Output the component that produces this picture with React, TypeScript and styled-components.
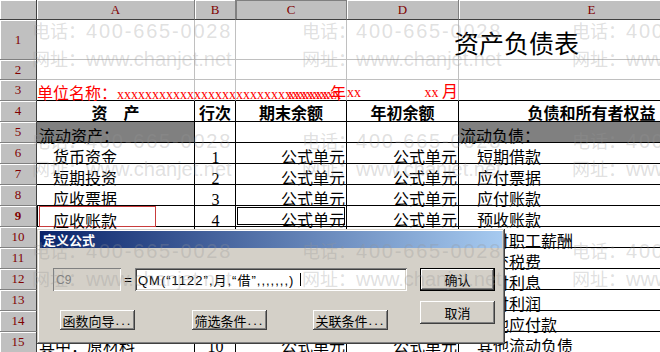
import styled, { createGlobalStyle } from 'styled-components';

const CJK = '"Noto Sans CJK SC", "Liberation Sans", sans-serif';
const SERIF = '"Liberation Serif", "Noto Sans CJK SC", serif';
const SANS = '"Liberation Sans", "Noto Sans CJK SC", sans-serif';

const GlobalStyle = createGlobalStyle`
  html, body {
    margin: 0;
    padding: 0;
    background: #ffffff;
  }
  #root {
    width: 660px;
    height: 352px;
  }
`;

const Page = styled.div`
  position: relative;
  width: 660px;
  height: 352px;
  overflow: hidden;
  background: #ffffff;
  font-family: ${CJK};
`;

const Sheet = styled.div`
  display: grid;
  grid-template-columns: 37px 158px 41px 111px 112px 266px;
  grid-template-rows: 20px 40px 20px repeat(13, 21px);
`;

const Corner = styled.div`
  background: #c0c0c0;
  border-right: 1px solid #404040;
  border-bottom: 1px solid #404040;
  box-shadow: inset 1px 1px 0 #ffffff;
`;

const ColHead = styled.div<{ $active?: boolean }>`
  display: flex;
  align-items: center;
  justify-content: center;
  background: #c0c0c0;
  border-right: 1px solid #808080;
  border-bottom: 1px solid #404040;
  box-shadow: inset 1px 1px 0 ${p => (p.$active ? '#808080' : '#ffffff')};
  color: #800000;
  font-family: ${SERIF};
  font-size: 13px;
`;

const RowHead = styled.div<{ $active?: boolean }>`
  display: flex;
  align-items: center;
  justify-content: center;
  background: #c0c0c0;
  border-right: 1px solid #404040;
  border-bottom: 1px solid #808080;
  box-shadow: inset 1px 1px 0 #ffffff;
  color: #800000;
  font-family: ${SERIF};
  font-size: 13px;
  font-weight: ${p => (p.$active ? 700 : 400)};
`;

// rows 1-3, light grid lines
const PlainCell = styled.div<{ $edge?: boolean; $justify?: string; $pt?: number }>`
  display: flex;
  align-items: baseline;
  justify-content: ${p => p.$justify ?? 'flex-start'};
  padding-top: ${p => p.$pt ?? 0}px;
  border-right: 1px solid #c0c0c0;
  border-bottom: 1px solid ${p => (p.$edge ? '#000000' : '#c0c0c0')};
  white-space: nowrap;
  min-width: 0;
`;

const Title = styled.span`
  margin-left: -5px;
  font-size: 25px;
  line-height: 25px;
  color: #000000;
`;

const RedLabel = styled.span`
  color: #ff0000;
  font-size: 16px;
  line-height: 16px;
`;

const RedFill = styled.span`
  color: #ff0000;
  font-family: ${SERIF};
  font-size: 14px;
  line-height: 16px;
`;

const HeadCell = styled.div`
  display: flex;
  justify-content: center;
  padding-top: 3px;
  border-right: 1px solid #000000;
  border-bottom: 1px solid #000000;
  font-size: 16px;
  line-height: 16px;
  font-weight: 700;
  white-space: nowrap;
`;

const TableCell = styled.div<{
  $align?: 'left' | 'center' | 'right';
  $indent?: number;
  $shade?: boolean;
  $serif?: boolean;
  $selected?: boolean;
  $mark?: boolean;
}>`
  display: flex;
  justify-content: ${p => (p.$align === 'right' ? 'flex-end' : p.$align === 'center' ? 'center' : 'flex-start')};
  padding-top: ${p => (p.$serif ? 7 : p.$mark ? 0 : 5)}px;
  padding-left: ${p => p.$indent ?? 1}px;
  padding-right: ${p => (p.$align === 'right' ? 1 : 0)}px;
  background: ${p => (p.$shade ? '#808080' : 'transparent')};
  border-right: 1px solid #000000;
  border-bottom: 1px solid #000000;
  box-shadow: ${p =>
    p.$selected
      ? 'inset 0 0 0 1px #ffffff, inset 0 0 0 2px #000000'
      : p.$mark
        ? 'inset 1px 0 0 #000000'
        : 'none'};
  font-family: ${p => (p.$serif ? SERIF : CJK)};
  font-size: 16px;
  line-height: 16px;
  color: #000000;
  white-space: nowrap;
  min-width: 0;
`;

const EditBox = styled.div`
  box-sizing: border-box;
  width: 117px;
  height: 21px;
  margin-left: 2px;
  padding: 5px 0 0 13px;
  border: 1px solid #c83c3c;
`;

const Dialog = styled.div`
  position: absolute;
  left: 37px;
  top: 229px;
  width: 468px;
  height: 115px;
  box-sizing: border-box;
  padding: 2px 3px 3px;
  background: #d4d0c8;
  box-shadow: inset -1px -1px 0 #404040, inset 1px 1px 0 #d4d0c8, inset -2px -2px 0 #808080,
    inset 2px 2px 0 #ffffff;
  font-family: ${CJK};
  font-size: 13px;
  color: #000000;
`;

const TitleBar = styled.div`
  display: flex;
  align-items: center;
  height: 17px;
  padding-left: 3px;
  background: linear-gradient(90deg, #0a246a, #a6caf0);
  color: #ffffff;
  font-size: 13px;
  line-height: 13px;
  font-weight: 700;
`;

const DialogBody = styled.div`
  display: grid;
  grid-template-columns: 354px 75px;
  column-gap: 13px;
  padding: 20px 0 0 13px;
`;

const LeftCol = styled.div`
  display: flex;
  flex-direction: column;
`;

const RightCol = styled.div`
  display: flex;
  flex-direction: column;
  gap: 10px;
`;

const FormulaRow = styled.div`
  display: flex;
  height: 23px;
`;

const RefField = styled.div`
  display: flex;
  align-items: center;
  box-sizing: border-box;
  width: 68px;
  padding-left: 3px;
  background: #d4d0c8;
  box-shadow: inset 1px 1px 0 #808080, inset -1px -1px 0 #ffffff;
  color: #808080;
  font-family: ${SANS};
  font-size: 12px;
`;

const Equals = styled.div`
  display: flex;
  align-items: center;
  justify-content: center;
  width: 14px;
  font-family: ${SANS};
  font-size: 13px;
`;

const FormulaField = styled.div`
  display: flex;
  align-items: center;
  flex: 1;
  box-sizing: border-box;
  padding-left: 3px;
  background: #ffffff;
  box-shadow: inset 1px 1px 0 #808080, inset -1px -1px 0 #ffffff, inset 2px 2px 0 #404040,
    inset -2px -2px 0 #d4d0c8;
  font-family: ${SANS};
  font-size: 13px;
  letter-spacing: 1px;
  white-space: pre;
`;

const Caret = styled.span`
  display: inline-block;
  width: 1px;
  height: 13px;
  margin-left: 6px;
  background: #000000;
`;

const ButtonRow = styled.div`
  display: flex;
  margin-top: 19px;
  padding-left: 7px;
`;

const Button = styled.div<{ $h?: number; $ml?: number; $default?: boolean }>`
  display: flex;
  align-items: center;
  justify-content: center;
  box-sizing: border-box;
  width: 75px;
  height: ${p => p.$h ?? 23}px;
  margin-left: ${p => p.$ml ?? 0}px;
  background: #d4d0c8;
  border: ${p => (p.$default ? '1px solid #000000' : 'none')};
  box-shadow: inset -1px -1px 0 #404040, inset 1px 1px 0 #ffffff, inset -2px -2px 0 #808080,
    inset 2px 2px 0 #d4d0c8;
  font-size: 13px;
  line-height: 13px;
  white-space: nowrap;
`;

const Dots = styled.span`
  font-family: ${SANS};
  letter-spacing: 2px;
  margin-left: 1px;
`;

const Watermark = styled.div`
  position: absolute;
  left: 32px;
  top: 16px;
  display: grid;
  grid-template-columns: repeat(3, 270px);
  grid-auto-rows: 110px;
  pointer-events: none;
  color: rgba(150, 150, 150, 0.3);
`;

const MarkLine = styled.div`
  height: 28px;
  line-height: 28px;
  white-space: nowrap;
  font-family: ${SANS};
  font-size: 20px;
`;

const MarkCJK = styled.span`
  font-family: ${CJK};
  font-size: 18px;
`;

const MarkDigits = styled.span<{ $spacing: number }>`
  letter-spacing: ${p => p.$spacing}px;
`;

type Row = {
  a: string;
  b: string;
  e: string;
  formula?: boolean;
  shade?: boolean;
  flat?: boolean;
};

const rows: Row[] = [
  { a: '流动资产：', b: '', e: '流动负债：', shade: true },
  { a: '货币资金', b: '1', e: '短期借款', formula: true },
  { a: '短期投资', b: '2', e: '应付票据', formula: true },
  { a: '应收票据', b: '3', e: '应付账款', formula: true },
  { a: '应收账款', b: '4', e: '预收账款', formula: true },
  { a: '预付账款', b: '5', e: '应付职工薪酬', formula: true },
  { a: '应收股利', b: '6', e: '应交税费', formula: true },
  { a: '应收利息', b: '7', e: '应付利息', formula: true },
  { a: '其他应收款', b: '8', e: '应付利润', formula: true },
  { a: '存货', b: '9', e: '其他应付款', formula: true },
  { a: '其中：原材料', b: '10', e: '其他流动负债', formula: true, flat: true },
];

const cols = ['A', 'B', 'C', 'D', 'E'];

export default function App() {
  return (
    <Page>
      <GlobalStyle />
      <Sheet>
        <Corner />
        {cols.map(c => (
          <ColHead key={c} $active={c === 'C'}>
            {c}
          </ColHead>
        ))}

        <RowHead>1</RowHead>
        <PlainCell />
        <PlainCell />
        <PlainCell />
        <PlainCell />
        <PlainCell $pt={10}>
          <Title>资产负债表</Title>
        </PlainCell>

        <RowHead>2</RowHead>
        <PlainCell />
        <PlainCell />
        <PlainCell />
        <PlainCell />
        <PlainCell />

        <RowHead>3</RowHead>
        <PlainCell $edge $pt={4}>
          <RedLabel>单位名称：</RedLabel>
          <RedFill>{'x'.repeat(32)}</RedFill>
        </PlainCell>
        <PlainCell $edge />
        <PlainCell $edge $pt={4} $justify="flex-end">
          <RedFill>xxxxxx</RedFill>
          <RedLabel>年</RedLabel>
        </PlainCell>
        <PlainCell $edge $pt={4} $justify="space-between">
          <RedFill>xx</RedFill>
          <RedFill>
            xx <RedLabel>月</RedLabel>
          </RedFill>
        </PlainCell>
        <PlainCell $edge />

        <RowHead>4</RowHead>
        <HeadCell>资　产</HeadCell>
        <HeadCell>行次</HeadCell>
        <HeadCell>期末余额</HeadCell>
        <HeadCell>年初余额</HeadCell>
        <HeadCell>负债和所有者权益</HeadCell>

        {rows.map((r, i) => {
          const n = i + 5;
          const current = n === 9;
          return [
            <RowHead key={`h${n}`} $active={current}>
              {n}
            </RowHead>,
            current ? (
              <TableCell key={`a${n}`} $mark $indent={0}>
                <EditBox>{r.a}</EditBox>
              </TableCell>
            ) : (
              <TableCell key={`a${n}`} $shade={r.shade} $indent={r.shade || r.flat ? 2 : 16}>
                {r.a}
              </TableCell>
            ),
            <TableCell key={`b${n}`} $align="center" $serif>
              {r.b}
            </TableCell>,
            <TableCell key={`c${n}`} $align="right" $selected={current}>
              {r.formula ? '公式单元' : ''}
            </TableCell>,
            <TableCell key={`d${n}`} $align="right">
              {r.formula ? '公式单元' : ''}
            </TableCell>,
            <TableCell key={`e${n}`} $shade={r.shade} $indent={r.shade ? 1 : 18}>
              {r.e}
            </TableCell>,
          ];
        })}
      </Sheet>

      <Dialog>
        <TitleBar>定义公式</TitleBar>
        <DialogBody>
          <LeftCol>
            <FormulaRow>
              <RefField>C9</RefField>
              <Equals>=</Equals>
              <FormulaField>
                QM(“1122”,月,“借”,,,,,,,)
                <Caret />
              </FormulaField>
            </FormulaRow>
            <ButtonRow>
              <Button $h={20}>
                函数向导<Dots>...</Dots>
              </Button>
              <Button $h={20} $ml={57}>
                筛选条件<Dots>...</Dots>
              </Button>
              <Button $h={20} $ml={46}>
                关联条件<Dots>...</Dots>
              </Button>
            </ButtonRow>
          </LeftCol>
          <RightCol>
            <Button $default>确认</Button>
            <Button>取消</Button>
          </RightCol>
        </DialogBody>
      </Dialog>

      <Watermark>
        {Array.from({ length: 12 }, (_, i) => (
          <div key={i}>
            <MarkLine>
              <MarkCJK>电话：</MarkCJK>
              <MarkDigits $spacing={1.8}>400-665-0028</MarkDigits>
            </MarkLine>
            <MarkLine>
              <MarkCJK>网址：</MarkCJK>
              <MarkDigits $spacing={0}>www.chanjet.net</MarkDigits>
            </MarkLine>
          </div>
        ))}
      </Watermark>
    </Page>
  );
}
